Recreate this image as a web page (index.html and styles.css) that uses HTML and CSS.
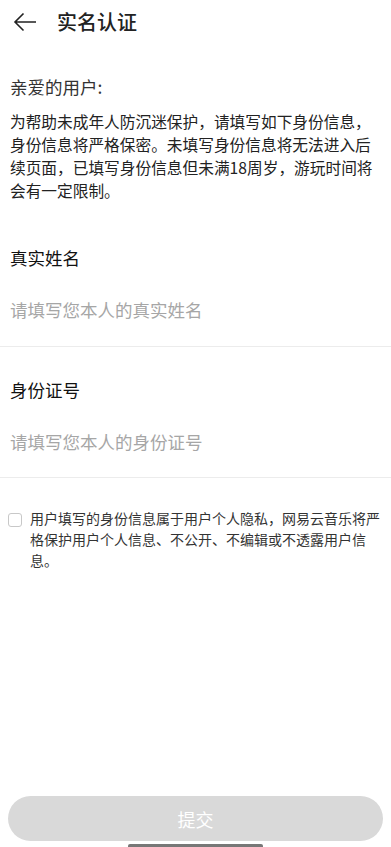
FILE: index.html
```html
<!DOCTYPE html>
<html lang="zh-CN">
<head>
<meta charset="utf-8">
<link rel="stylesheet" href="styles.css">
</head>
<body>
<div class="page">
  <header class="topbar">
    <svg class="back" width="24" height="20" viewBox="0 0 24 20"><path d="M23 10H2M10.5 1.5L2 10l8.5 8.5" fill="none" stroke="#222" stroke-width="1.6"/></svg>
    <h1 class="title">实名认证</h1>
  </header>
  <section class="intro">
    <p class="greet">亲爱的用户:</p>
    <p class="desc">为帮助未成年人防沉迷保护，请填写如下身份信息，身份信息将严格保密。未填写身份信息将无法进入后续页面，已填写身份信息但未满18周岁，游玩时间将会有一定限制。</p>
  </section>
  <div class="fields">
    <div class="field">
      <div class="label">真实姓名</div>
      <div class="placeholder">请填写您本人的真实姓名</div>
    </div>
    <div class="field">
      <div class="label">身份证号</div>
      <div class="placeholder">请填写您本人的身份证号</div>
    </div>
  </div>
  <div class="agree">
    <span class="box"></span>
    <p class="agree-text">用户填写的身份信息属于用户个人隐私，网易云音乐将严格保护用户个人信息、不公开、不编辑或不透露用户信息。</p>
  </div>
  <div class="spacer"></div>
  <div class="bottom">
    <button class="submit">提交</button>
    <div class="home"></div>
  </div>
</div>
</body>
</html>
```
FILE: styles.css
```css
* { box-sizing: border-box; }
html, body { margin: 0; padding: 0; background: #fff; }
body {
  font-family: "Noto Sans CJK SC", "Noto Sans", sans-serif;
  color: #222;
}
.page {
  width: 391px;
  height: 847px;
  display: flex;
  flex-direction: column;
  overflow: hidden;
}
.topbar {
  height: 44px;
  display: flex;
  align-items: center;
  padding-left: 13px;
}
.back { display: block; }
.title {
  margin: 0 0 0 20px;
  font-size: 20px;
  font-weight: 500;
  line-height: 28px;
  color: #222;
}
.intro {
  padding: 30px 10px 0 10px;
}
.greet {
  margin: 0;
  font-size: 17.5px;
  line-height: 26px;
  color: #333;
}
.desc {
  margin: 10px 0 0 0;
  font-size: 15.7px;
  line-height: 23px;
  color: #222;
}
.fields {
  margin-top: 13px;
}
.field {
  padding: 0 10px;
  border-bottom: 1.5px solid #ececec;
  height: 131.5px;
  display: flex;
  flex-direction: column;
}
.label {
  padding-top: 30px;
  font-size: 17.5px;
  line-height: 26px;
  color: #111;
}
.placeholder {
  margin-top: 26px;
  font-size: 17.5px;
  line-height: 26px;
  color: #a6a6a6;
}
.agree {
  display: flex;
  align-items: flex-start;
  padding: 30px 10px 0 8px;
}
.box {
  flex: none;
  width: 14px;
  height: 14px;
  border: 1px solid #c8c8c8;
  border-radius: 3px;
  margin-top: 5px;
}
.agree-text {
  margin: 0 0 0 8px;
  font-size: 14px;
  line-height: 21px;
  color: #333;
}
.spacer { flex: 1; }
.bottom {
  display: flex;
  flex-direction: column;
  align-items: center;
  padding: 0 8px;
}
.submit {
  width: 375px;
  height: 45px;
  border: none;
  border-radius: 23px;
  background: #d9d9d9;
  color: #fff;
  font-family: "Noto Sans CJK SC", sans-serif;
  font-size: 18px;
  padding: 0;
}
.home {
  width: 135px;
  height: 3px;
  margin-top: 3px;
  background: #777;
  border-radius: 2px 2px 0 0;
}
```
